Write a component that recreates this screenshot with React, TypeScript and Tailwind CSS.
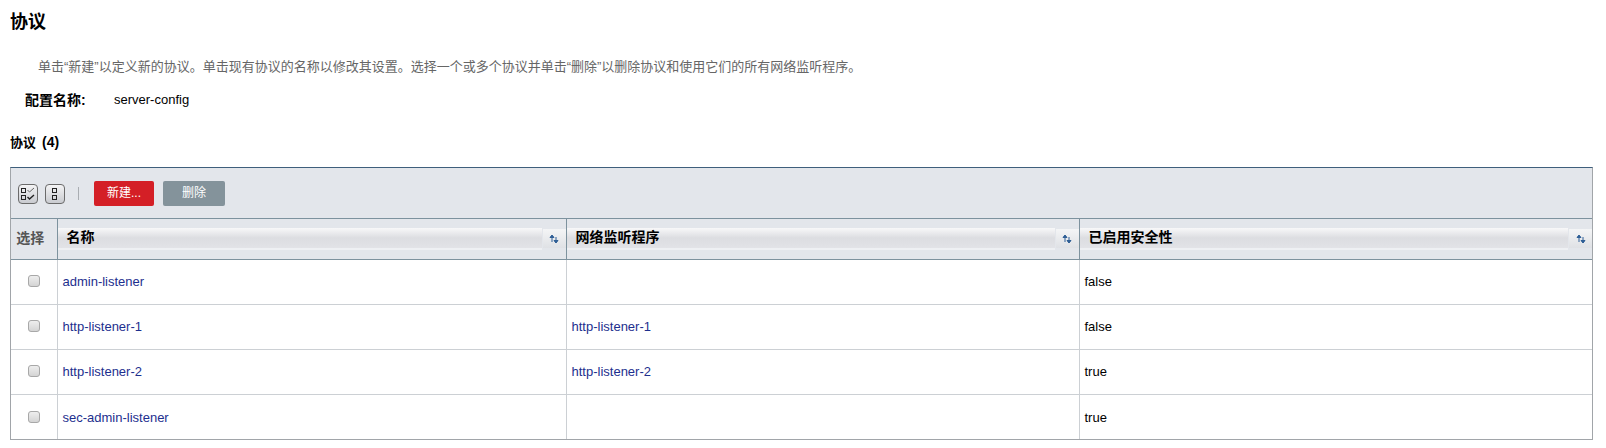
const font = "font-['Liberation_Sans','Noto_Sans_CJK_SC',sans-serif]";

type Row = { name: string; listener: string; secure: string };

const rows: Row[] = [
  { name: 'admin-listener', listener: '', secure: 'false' },
  { name: 'http-listener-1', listener: 'http-listener-1', secure: 'false' },
  { name: 'http-listener-2', listener: 'http-listener-2', secure: 'true' },
  { name: 'sec-admin-listener', listener: '', secure: 'true' },
];

function SortIcon() {
  return (
    <svg width="10" height="10" viewBox="0 0 10 10" className="text-[#2f5f96]">
      <path d="M3 8V2M1 3.5L3 1l2 2.5z" fill="currentColor" stroke="currentColor" strokeWidth="1" />
      <path d="M7 3v6M5 6.5L7 9l2-2.5z" fill="currentColor" stroke="currentColor" strokeWidth="1" />
    </svg>
  );
}

function HeaderCell({ label }: { label: string }) {
  return (
    <th className="p-0 border-l border-[#7d929e] align-middle">
      <div className="flex items-center h-[22px]">
        <div className="flex-1 h-[22px] flex items-center pl-[9px] text-[14px] font-bold text-black text-left bg-gradient-to-b from-[#f8f8f9] via-[#dcdde1] to-[#e2e3e7] border-b-2 border-[#eef0f3]">
          {label}
        </div>
        <div className="ml-[1px] w-[23px] h-[19px] flex items-center justify-center bg-gradient-to-b from-[#f4f5f6] to-[#dfe1e5]">
          <SortIcon />
        </div>
      </div>
    </th>
  );
}

function SelectAllIcon({ double }: { double: boolean }) {
  return (
    <button className="w-[20px] h-[20px] rounded-[4px] border border-[#6b6b6b] bg-gradient-to-b from-[#f4f4f5] to-[#c9cbd0] flex items-center justify-center">
      <svg width="14" height="14" viewBox="0 0 14 14" fill="none" stroke="#222" strokeWidth="1">
        {double ? (
          <>
            <rect x="0.5" y="1.5" width="4" height="4" />
            <rect x="0.5" y="8.5" width="4" height="4" />
            <path d="M6.5 3l2 2L13 1" stroke="#666" />
            <path d="M6.5 10l2 2L13 8" strokeWidth="1.4" />
          </>
        ) : (
          <>
            <rect x="4.5" y="1.5" width="4" height="4" />
            <rect x="4.5" y="8.5" width="4" height="4" />
          </>
        )}
      </svg>
    </button>
  );
}

export default function App() {
  return (
    <div className={`${font} h-[448px] bg-white overflow-hidden text-[13px] text-black`}>
      <h1 className="pl-[10px] pt-[11px] text-[18px] leading-[22px] font-bold">协议</h1>
      <p className="pl-[38px] mt-[26px] leading-[16px] text-[#666]">
        单击“新建”以定义新的协议。单击现有协议的名称以修改其设置。选择一个或多个协议并单击“删除”以删除协议和使用它们的所有网络监听程序。
      </p>
      <div className="flex items-center pl-[25px] mt-[17px] leading-[16px]">
        <span className="w-[89px] text-[14px] font-bold">配置名称:</span>
        <span>server-config</span>
      </div>
      <h2 className="pl-[10px] mt-[26px] leading-[16px] font-bold">
        协议<span className="ml-[6px] text-[14px]">(4)</span>
      </h2>

      <div className="ml-[10px] mr-[13px] mt-[16px] border border-[#a1a5a9] border-t-[#3e5f7c]">
        <div className="h-[51px] bg-[#e3e6eb] flex items-center pl-[7px] border-b border-[#7d929e]">
          <div className="flex gap-[7px] items-center mt-[2px]">
            <SelectAllIcon double />
            <SelectAllIcon double={false} />
          </div>
          <div className="ml-[13px] w-px h-[13px] bg-[#a9adb2]" />
          <button className="ml-[15px] w-[60px] h-[25px] rounded-[2px] bg-[#d41f26] text-white text-[12px]">新建...</button>
          <button className="ml-[9px] w-[62px] h-[25px] rounded-[2px] bg-[#84939b] text-white text-[12px]">删除</button>
        </div>
        <table className="w-full table-fixed border-collapse">
          <colgroup>
            <col className="w-[46px]" />
            <col className="w-[509px]" />
            <col className="w-[513px]" />
            <col />
          </colgroup>
          <thead>
            <tr className="h-[40px] bg-[#e3e6eb] border-b border-[#7d929e]">
              <th className="p-0 pr-[7px] text-[14px] font-bold text-[#555] text-center">选择</th>
              <HeaderCell label="名称" />
              <HeaderCell label="网络监听程序" />
              <HeaderCell label="已启用安全性" />
            </tr>
          </thead>
          <tbody>
            {rows.map((r, i) => (
              <tr key={r.name} className={`h-[45px] ${i < rows.length - 1 ? 'border-b border-[#ccd0d4]' : ''}`}>
                <td className="p-0 pt-[1px] text-center align-middle">
                  <span className="inline-block w-[12px] h-[12px] rounded-[3px] border border-[#a8a8a8] bg-gradient-to-b from-[#eeeeee] to-[#d4d4d4] align-middle mb-[3px]" />
                </td>
                <td className="p-0 pt-[1px] pl-[5px] border-l border-[#ccd0d4] text-[#1d2f8e]">{r.name}</td>
                <td className="p-0 pt-[1px] pl-[5px] border-l border-[#ccd0d4] text-[#1d2f8e]">{r.listener}</td>
                <td className="p-0 pt-[1px] pl-[5px] border-l border-[#ccd0d4] text-black">{r.secure}</td>
              </tr>
            ))}
          </tbody>
        </table>
      </div>
    </div>
  );
}
